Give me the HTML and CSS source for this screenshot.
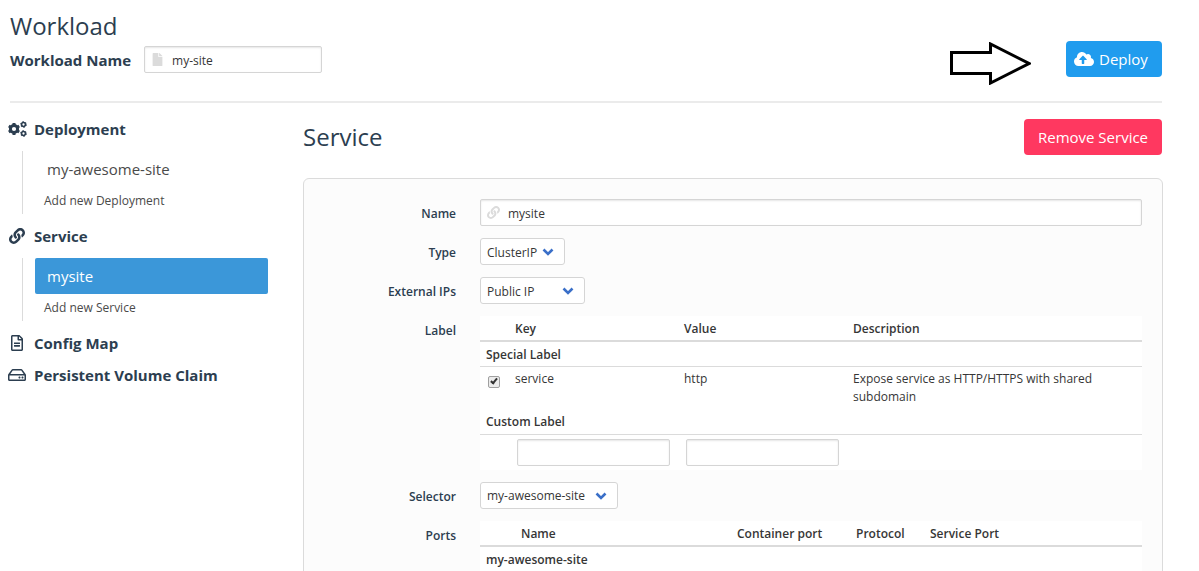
FILE: index.html
```html
<!DOCTYPE html>
<html lang="en">
<head>
<meta charset="utf-8">
<title>Workload</title>
<link rel="stylesheet" href="styles.css">
</head>
<body>
<svg class="defs" aria-hidden="true">
  <symbol id="i-link" viewBox="0 0 512 512"><path d="M326.612 185.391c59.747 59.809 58.927 155.698.36 214.59-.11.12-.24.25-.36.37l-67.2 67.2c-59.27 59.27-155.699 59.262-214.96 0-59.27-59.26-59.27-155.7 0-214.96l37.106-37.106c9.84-9.84 26.786-3.3 27.294 10.606.648 17.722 3.826 35.527 9.69 52.721 1.986 5.822.567 12.262-3.783 16.612l-13.087 13.087c-28.026 28.026-28.905 73.66-1.155 101.96 28.024 28.579 74.086 28.749 102.325.51l67.2-67.19c28.191-28.191 28.073-73.757 0-101.83-3.701-3.694-7.429-6.564-10.341-8.569a16.037 16.037 0 0 1-6.947-12.606c-.396-10.567 3.348-21.456 11.698-29.806l21.054-21.055c5.521-5.521 14.182-6.199 20.584-1.731a152.482 152.482 0 0 1 20.522 17.197zM467.547 44.449c-59.261-59.262-155.69-59.27-214.96 0l-67.2 67.2c-.12.12-.25.25-.36.37-58.566 58.892-59.387 154.781.36 214.59a152.454 152.454 0 0 0 20.521 17.196c6.402 4.468 15.064 3.789 20.584-1.731l21.054-21.055c8.35-8.35 12.094-19.239 11.698-29.806a16.037 16.037 0 0 0-6.947-12.606c-2.912-2.005-6.64-4.875-10.341-8.569-28.073-28.073-28.191-73.639 0-101.83l67.2-67.19c28.239-28.239 74.3-28.069 102.325.51 27.75 28.3 26.872 73.934-1.155 101.96l-13.087 13.087c-4.35 4.35-5.769 10.79-3.783 16.612 5.864 17.194 9.042 34.999 9.69 52.721.509 13.906 17.454 20.446 27.294 10.606l37.106-37.106c59.271-59.259 59.271-155.699.001-214.959z"/></symbol>
  <symbol id="i-chevron" viewBox="0 0 12 8"><path d="M1.500 1.500 6 6l4.500-4.500" fill="none" stroke="currentColor" stroke-width="2.600"/></symbol>
</svg>
<main class="page">
  <header class="top">
    <div>
      <h1 class="title">Workload</h1>
      <div class="name-row">
        <label class="name-label" for="wname">Workload Name</label>
        <span class="icon-field icon-field-short">
          <svg class="field-icon" viewBox="0 0 384 512"><path d="M224 136V0H24C10.700 0 0 10.700 0 24v464c0 13.300 10.700 24 24 24h336c13.300 0 24-10.700 24-24V160H248c-13.200 0-24-10.800-24-24zm160-14.100v6.100H256V0h6.100c6.400 0 12.500 2.500 17 7l97.900 98c4.500 4.500 7 10.600 7 16.900z"/></svg>
          <input class="input" id="wname" type="text" value="my-site">
        </span>
      </div>
    </div>
    <div class="deploy-wrap">
      <button class="btn btn-deploy" type="button"><svg class="cloud" viewBox="0 0 640 512"><path d="M537.600 226.600c4.100-10.700 6.400-22.400 6.400-34.600 0-53-43-96-96-96-19.700 0-38.100 6-53.300 16.200C367 64.200 315.300 32 256 32c-88.400 0-160 71.600-160 160 0 2.700.1 5.400.2 8.100C40.200 219.800 0 273.200 0 336c0 79.500 64.500 144 144 144h368c70.700 0 128-57.300 128-128 0-61.900-44-113.600-102.400-125.400zM393.400 288H328v112c0 8.800-7.200 16-16 16h-48c-8.800 0-16-7.200-16-16V288h-65.400c-14.300 0-21.400-17.200-11.300-27.400l105.400-105.400c6.200-6.200 16.400-6.200 22.600 0l105.400 105.400c10.100 10.200 2.900 27.400-11.300 27.400z"/></svg>Deploy</button>
      <svg class="pointer" viewBox="0 0 82 43"><path d="M2.500 10.500h39V2L80 21.500 41.500 41v-9.500h-39z" fill="#fff" stroke="#000" stroke-width="3"/></svg>
    </div>
  </header>

  <div class="columns">
    <nav class="side">
      <h2 class="side-head"><svg class="side-icon" viewBox="0 0 20 16"><g fill="none" stroke="currentColor"><circle cx="7" cy="8" r="3.600" stroke-width="3"/><path stroke-width="3" d="M7 2v2.500M7 11.500V14M1.800 5l2.200 1.300M10 9.700l2.200 1.300M1.800 11 4 9.700M10 6.300 12.200 5"/><circle cx="16.500" cy="3.500" r="1.900" stroke-width="1.500"/><circle cx="16.500" cy="3.500" r="2.900" stroke-width="1" stroke-dasharray="1.500 1.530"/><circle cx="16.500" cy="12.500" r="1.900" stroke-width="1.500"/><circle cx="16.500" cy="12.500" r="2.900" stroke-width="1" stroke-dasharray="1.500 1.530"/></g></svg>Deployment</h2>
      <div class="side-list">
        <a class="side-item" href="#">my-awesome-site</a>
        <a class="side-add" href="#">Add new Deployment</a>
      </div>
      <h2 class="side-head"><svg class="side-icon"><use href="#i-link"/></svg>Service</h2>
      <div class="side-list">
        <a class="side-item active" href="#">mysite</a>
        <a class="side-add" href="#">Add new Service</a>
      </div>
      <h2 class="side-head"><svg class="side-icon" viewBox="0 0 384 512"><path d="M288 248v28c0 6.600-5.400 12-12 12H108c-6.600 0-12-5.400-12-12v-28c0-6.600 5.400-12 12-12h168c6.600 0 12 5.400 12 12zm-12 72H108c-6.600 0-12 5.400-12 12v28c0 6.600 5.400 12 12 12h168c6.600 0 12-5.400 12-12v-28c0-6.600-5.400-12-12-12zm108-188.100V464c0 26.500-21.500 48-48 48H48c-26.500 0-48-21.500-48-48V48C0 21.500 21.500 0 48 0h204.100C264.800 0 277 5.100 286 14.100L369.900 98c9 8.900 14.100 21.200 14.100 33.900zm-128-80V128h76.100L256 51.900zM336 464V176H232c-13.300 0-24-10.700-24-24V48H48v416h288z"/></svg>Config Map</h2>
      <h2 class="side-head"><svg class="side-icon" viewBox="0 0 576 512"><path d="M567.403 235.642L462.323 84.589A48 48 0 0 0 422.919 64H153.081a48 48 0 0 0-39.404 20.589L8.597 235.642A48.001 48.001 0 0 0 0 263.054V400c0 26.510 21.490 48 48 48h480c26.510 0 48-21.490 48-48V263.054c0-9.801-3-19.366-8.597-27.412zM153.081 112h269.838l77.913 112H75.168l77.913-112zM528 400H48V272h480v128zm-32-64c0 17.673-14.327 32-32 32s-32-14.327-32-32 14.327-32 32-32 32 14.327 32 32zm-96 0c0 17.673-14.327 32-32 32s-32-14.327-32-32 14.327-32 32-32 32 14.327 32 32z"/></svg>Persistent Volume Claim</h2>
    </nav>

    <section class="content">
      <div class="content-head">
        <h2 class="title">Service</h2>
        <button class="btn btn-remove" type="button">Remove Service</button>
      </div>
      <form class="panel">
        <div class="row">
          <label class="row-label" for="sname">Name</label>
          <span class="icon-field">
            <svg class="field-icon"><use href="#i-link"/></svg>
            <input class="input" id="sname" type="text" value="mysite">
          </span>
        </div>
        <div class="row">
          <label class="row-label" for="type">Type</label>
          <span class="select select-type"><select id="type"><option>ClusterIP</option></select><svg class="chevron"><use href="#i-chevron"/></svg></span>
        </div>
        <div class="row">
          <label class="row-label" for="ips">External IPs</label>
          <span class="select select-ips"><select id="ips"><option>Public IP</option></select><svg class="chevron"><use href="#i-chevron"/></svg></span>
        </div>
        <div class="row">
          <span class="row-label">Label</span>
          <table class="table labels">
            <colgroup><col class="c-check"><col class="c-key"><col class="c-key"><col></colgroup>
            <thead><tr><th></th><th>Key</th><th>Value</th><th>Description</th></tr></thead>
            <tbody>
              <tr class="group"><th colspan="4">Special Label</th></tr>
              <tr class="entry"><td><input class="check" type="checkbox" checked aria-label="service"></td><td>service</td><td>http</td><td>Expose service as HTTP/HTTPS with shared subdomain</td></tr>
              <tr class="group"><th colspan="4">Custom Label</th></tr>
              <tr class="custom"><td></td><td><input class="input" type="text" aria-label="Key"></td><td><input class="input" type="text" aria-label="Value"></td><td></td></tr>
            </tbody>
          </table>
        </div>
        <div class="row">
          <label class="row-label" for="selector">Selector</label>
          <span class="select select-selector"><select id="selector"><option>my-awesome-site</option></select><svg class="chevron"><use href="#i-chevron"/></svg></span>
        </div>
        <div class="row">
          <span class="row-label">Ports</span>
          <table class="table">
            <colgroup><col class="c-indent"><col class="c-name"><col class="c-port"><col class="c-proto"><col></colgroup>
            <thead><tr><th></th><th>Name</th><th>Container port</th><th>Protocol</th><th>Service Port</th></tr></thead>
            <tbody><tr class="group"><th colspan="5">my-awesome-site</th></tr></tbody>
          </table>
        </div>
      </form>
    </section>
  </div>
</main>
</body>
</html>
```
FILE: styles.css
```css
* { box-sizing: border-box; }
body {
  margin: 0;
  background: #fff;
  color: #363636;
  font: 12px/18px "Open Sans", "Noto Sans", sans-serif;
}
svg { fill: currentColor; }
input, select, button { font: inherit; color: inherit; }
.defs { position: absolute; width: 0; height: 0; }

.page {
  height: 100vh;
  overflow-y: auto;
  scrollbar-width: none;
  padding: 11px 37px 0 10px;
}
.title {
  margin: 0;
  color: #2c3e50;
  font-size: 24px;
  line-height: 30px;
  font-weight: 500;
}
.top {
  display: flex;
  justify-content: space-between;
  align-items: flex-start;
  padding-bottom: 24px;
  border-bottom: 2px solid #ebebeb;
}
.name-row { display: flex; align-items: center; gap: 13px; margin-top: 5px; }
.name-label { color: #2c3e50; font-size: 15px; font-weight: 700; }

.icon-field { position: relative; display: block; flex: 1; }
.icon-field-short { flex: 0 0 178px; }
.icon-field .input { padding-left: 27px; }
.field-icon {
  position: absolute;
  left: 7px;
  top: 7px;
  width: 13px;
  height: 13px;
  color: #dbdbdb;
}
.input {
  display: block;
  width: 100%;
  height: 27px;
  padding: 1px 8px 0;
  border: 1px solid #d5d5d5;
  border-radius: 2px;
  background: #fff;
  box-shadow: inset 0 1px 2px rgba(10, 10, 10, .1);
}

.deploy-wrap { position: relative; padding-top: 30px; }
.pointer { position: absolute; right: 131px; top: 31px; width: 82px; height: 43px; }
.btn {
  display: flex;
  align-items: center;
  justify-content: center;
  height: 36px;
  padding: 0 12px;
  border: 0;
  border-radius: 4px;
  color: #fff;
  font-size: 15px;
}
.btn-deploy { justify-content: flex-start; gap: 5px; width: 96px; padding: 0 8px; background: #209cee; }
.btn-remove { width: 138px; white-space: nowrap; background: #ff3860; }
.cloud { width: 20px; height: 16px; flex: none; }

.columns { display: grid; grid-template-columns: 258px minmax(0, 1fr); gap: 35px; }
.side { display: flex; flex-direction: column; gap: 12px; padding-top: 16px; }
.side-head {
  display: flex;
  align-items: center;
  gap: 7px;
  margin: 0 0 0 -3px;
  color: #2c3e50;
  font-size: 15px;
  line-height: 20px;
  font-weight: 700;
}
.side-icon { width: 20px; height: 16px; flex: none; }
.side-list { margin-left: 12px; padding-left: 12px; border-left: 1px solid #dbdbdb; }
.side-item {
  display: block;
  padding: 0 12px;
  border-radius: 2px;
  color: #4a4a4a;
  font-size: 15px;
  line-height: 36px;
  text-decoration: none;
}
.side-item.active { background: #3b97d9; color: #fff; }
.side-add {
  display: block;
  padding: 0 9px;
  color: #4a4a4a;
  line-height: 27px;
  text-decoration: none;
}

.content { padding-top: 16px; }
.content-head { display: flex; justify-content: space-between; align-items: center; margin-bottom: 23px; }
.panel {
  display: flex;
  flex-direction: column;
  gap: 12px;
  padding: 20px;
  margin-right: -1px;
  border: 1px solid #dbdbdb;
  border-radius: 6px;
  background: #fcfcfc;
}
.row { display: flex; align-items: flex-start; gap: 24px; }
.row-label {
  flex: 0 0 132px;
  padding-top: 6px;
  color: #2c3e50;
  font-weight: 600;
  text-align: right;
}
.select { position: relative; }
.select select {
  display: block;
  width: 100%;
  height: 27px;
  padding: 2px 6px 0;
  border: 1px solid #d5d5d5;
  border-radius: 3px;
  background: #fff;
  appearance: none;
}
.select-type { width: 85px; }
.select-ips { width: 105px; }
.select-selector { width: 138px; }
.chevron {
  position: absolute;
  right: 11px;
  top: 10px;
  width: 12px;
  height: 8px;
  color: #3a6fc8;
  pointer-events: none;
}

.table {
  flex: 1;
  width: 100%;
  table-layout: fixed;
  border-collapse: collapse;
  background: #fff;
}
.table th, .table td { padding: 3px 6px; text-align: left; vertical-align: top; }
.table th { font-weight: 600; line-height: 17px; }
.table thead th { height: 24px; padding-top: 4px; border-bottom: 2px solid #dbdbdb; }
.table .group th { height: 25px; padding-top: 4px; border-bottom: 1px solid #dbdbdb; }
.entry td { height: 42px; }
.table .custom td { padding: 4px 8px; }
.c-check { width: 29px; }
.c-key { width: 169px; }
.c-indent { width: 35px; }
.c-name { width: 216px; }
.c-port { width: 119px; }
.c-proto { width: 74px; }
.check {
  display: block;
  position: relative;
  width: 12px;
  height: 12px;
  margin: 6px 0 0 2px;
  appearance: none;
  border: 1px solid #a0a0a0;
  border-radius: 2px;
  background: #ececec;
}
.check:checked::after {
  content: "";
  position: absolute;
  left: 3px;
  top: 0;
  width: 2px;
  height: 5px;
  border: solid #333;
  border-width: 0 2px 2px 0;
  transform: rotate(40deg);
}
```
